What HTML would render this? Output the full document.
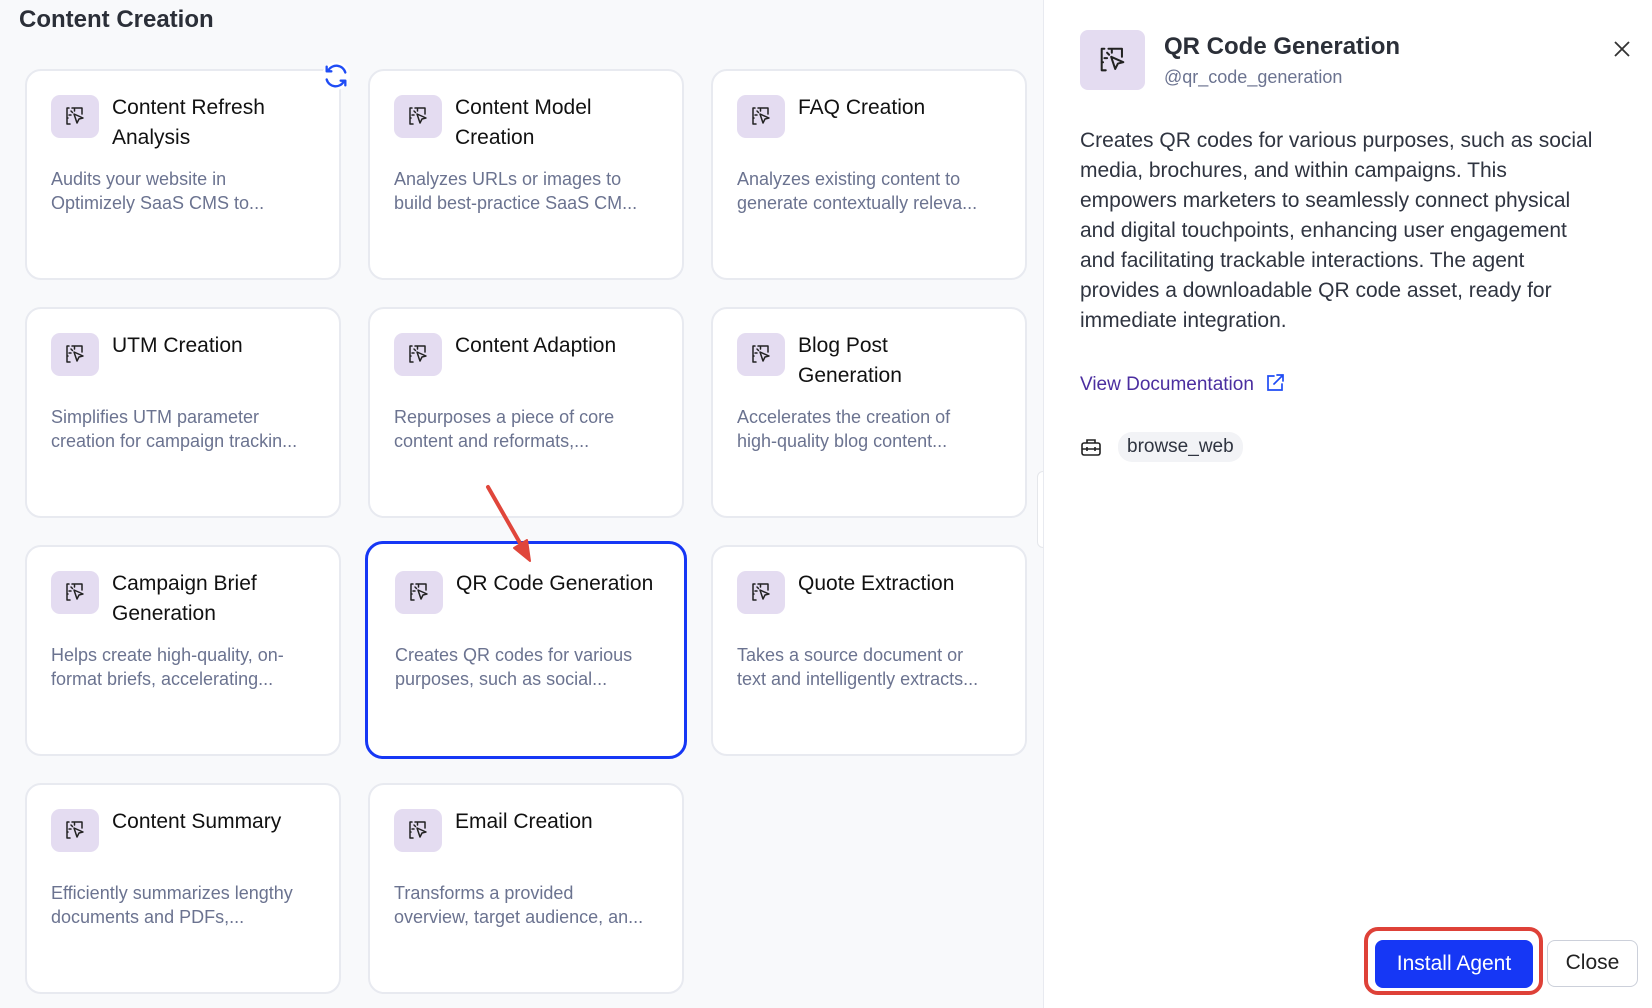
<!DOCTYPE html><html><head><style>
body{margin:0;width:1652px;height:1008px;overflow:hidden;background:#f8f9fb;font-family:"Liberation Sans",sans-serif;position:relative}
h1{position:absolute;left:19px;top:6px;margin:0;font-size:24px;font-weight:bold;color:#2b2f38}
.card{position:absolute;width:316px;height:211px;background:#fff;border:2px solid #e8eaf0;border-radius:16px;box-sizing:border-box}
.ic{position:absolute;left:24px;top:24px;width:48px;height:43px;background:#e4dcf1;border-radius:9px}
.ic svg{position:absolute;left:13px;top:11px}
.t{position:absolute;left:85px;top:22px;right:12px;font-size:21px;line-height:30px;color:#111}
.d{position:absolute;left:24px;top:96px;width:252px;font-size:18px;line-height:24px;color:#6b7390}
.sel{border:3px solid #1637f5}
.panel{position:absolute;left:1043px;top:0;width:609px;height:1008px;background:#fff;border-left:1px solid #e8eaf0}
</style></head><body>
<h1>Content Creation</h1>
<svg width="0" height="0" style="position:absolute"><defs><g id="i" fill="none" stroke="#222" stroke-width="1.5" stroke-linecap="round" stroke-linejoin="round"><path d="M7 2H17V8M5 18H2V2H4M2 12H3"/><path d="M9 8l9 4-4 1-2 4z"/><path d="M6 5l1.5 1.5M9.5 3v2M4 9h2"/></g></defs></svg>

<div class="card" style="left:25px;top:69px"><div class="ic"><svg width="22" height="20" viewBox="0 0 20 20"><use href="#i"/></svg></div><div class="t">Content Refresh Analysis</div><div class="d">Audits your website in Optimizely SaaS CMS to...</div></div>
<div class="card" style="left:368px;top:69px"><div class="ic"><svg width="22" height="20" viewBox="0 0 20 20"><use href="#i"/></svg></div><div class="t">Content Model Creation</div><div class="d">Analyzes URLs or images to build best-practice SaaS CM...</div></div>
<div class="card" style="left:711px;top:69px"><div class="ic"><svg width="22" height="20" viewBox="0 0 20 20"><use href="#i"/></svg></div><div class="t">FAQ Creation</div><div class="d">Analyzes existing content to generate contextually releva...</div></div>

<div class="card" style="left:25px;top:307px"><div class="ic"><svg width="22" height="20" viewBox="0 0 20 20"><use href="#i"/></svg></div><div class="t">UTM Creation</div><div class="d">Simplifies UTM parameter creation for campaign trackin...</div></div>
<div class="card" style="left:368px;top:307px"><div class="ic"><svg width="22" height="20" viewBox="0 0 20 20"><use href="#i"/></svg></div><div class="t">Content Adaption</div><div class="d">Repurposes a piece of core content and reformats,...</div></div>
<div class="card" style="left:711px;top:307px"><div class="ic"><svg width="22" height="20" viewBox="0 0 20 20"><use href="#i"/></svg></div><div class="t">Blog Post<br>Generation</div><div class="d">Accelerates the creation of high-quality blog content...</div></div>

<div class="card" style="left:25px;top:545px"><div class="ic"><svg width="22" height="20" viewBox="0 0 20 20"><use href="#i"/></svg></div><div class="t">Campaign Brief Generation</div><div class="d">Helps create high-quality, on-format briefs, accelerating...</div></div>
<div class="card sel" style="left:365px;top:541px;width:322px;height:218px;border-radius:18px"><div class="ic" style="left:27px;top:27px"><svg width="22" height="20" viewBox="0 0 20 20"><use href="#i"/></svg></div><div class="t" style="left:88px;top:25px">QR Code Generation</div><div class="d" style="left:27px;top:99px">Creates QR codes for various purposes, such as social...</div></div>
<div class="card" style="left:711px;top:545px"><div class="ic"><svg width="22" height="20" viewBox="0 0 20 20"><use href="#i"/></svg></div><div class="t">Quote Extraction</div><div class="d">Takes a source document or text and intelligently extracts...</div></div>

<div class="card" style="left:25px;top:783px"><div class="ic"><svg width="22" height="20" viewBox="0 0 20 20"><use href="#i"/></svg></div><div class="t">Content Summary</div><div class="d">Efficiently summarizes lengthy documents and PDFs,...</div></div>
<div class="card" style="left:368px;top:783px"><div class="ic"><svg width="22" height="20" viewBox="0 0 20 20"><use href="#i"/></svg></div><div class="t">Email Creation</div><div class="d">Transforms a provided overview, target audience, an...</div></div>

<svg style="position:absolute;left:322px;top:62px" width="28" height="28" viewBox="0 0 24 24" fill="none" stroke="#1f4cf5" stroke-width="2" stroke-linecap="round" stroke-linejoin="round"><circle cx="12" cy="12" r="12" fill="#fff" stroke="none"/><path d="M20 9a8 8 0 0 0-14.5-2M4 4v4h4M4 15a8 8 0 0 0 14.5 2M20 20v-4h-4"/></svg>

<svg style="position:absolute;left:0;top:0" width="600" height="600"><path d="M488 487L524 550" stroke="#e0463b" stroke-width="4" stroke-linecap="round"/><path d="M514 548L530 561L527 540Z" fill="#e0463b" stroke="#e0463b" stroke-width="2" stroke-linejoin="round"/></svg>

<div style="position:absolute;left:1037px;top:471px;width:12px;height:77px;background:#fff;border:1px solid #e5e7eb;border-radius:6px;box-sizing:border-box"></div>

<div class="panel">
<div style="position:absolute;left:36px;top:30px;width:65px;height:60px;background:#e4dcf1;border-radius:8px"><svg style="position:absolute;left:19px;top:16px" width="27" height="27" viewBox="0 0 20 20"><use href="#i"/></svg></div>
<div style="position:absolute;left:120px;top:33px;font-size:24px;font-weight:bold;color:#2b2f38">QR Code Generation</div>
<div style="position:absolute;left:120px;top:67px;font-size:18px;color:#6b7390">@qr_code_generation</div>
<svg style="position:absolute;left:569px;top:40px" width="18" height="18" viewBox="0 0 18 18" stroke="#333" stroke-width="1.8"><path d="M2 2L16 16M16 2L2 16"/></svg>
<div style="position:absolute;left:36px;top:126px;width:525px;font-size:21px;line-height:30px;color:#2f3440">Creates QR codes for various purposes, such as social media, brochures, and within campaigns. This empowers marketers to seamlessly connect physical and digital touchpoints, enhancing user engagement and facilitating trackable interactions. The agent provides a downloadable QR code asset, ready for immediate integration.</div>
<div style="position:absolute;left:36px;top:373px;font-size:19px;color:#4b2ea0;white-space:nowrap">View Documentation <svg style="vertical-align:-3px;margin-left:6px" width="20" height="20" viewBox="0 0 20 20" fill="none" stroke="#1f4cf5" stroke-width="1.7" stroke-linecap="round"><path d="M9 3H3v14h14v-6M12 2h6v6M18 2L9 11"/></svg></div>
<svg style="position:absolute;left:37px;top:438px" width="20" height="18" viewBox="0 0 20 18" fill="none" stroke="#222" stroke-width="1.6"><rect x="1" y="5" width="18" height="12" rx="2"/><path d="M6 5V2h8v3M1 11h18M6 9v4M14 9v4"/></svg>
<div style="position:absolute;left:74px;top:432px;height:30px;padding:0 9px;background:#f2f3f6;border-radius:14px;font-size:19px;line-height:30px;color:#2f3440">browse_web</div>
<div style="position:absolute;left:320px;top:927px;width:179px;height:68px;border:4px solid #de4138;border-radius:14px;box-sizing:border-box"></div>
<div style="position:absolute;left:331px;top:940px;width:158px;height:48px;background:#1637f5;border-radius:8px;color:#fff;font-size:21px;line-height:48px;text-align:center">Install Agent</div>
<div style="position:absolute;left:503px;top:940px;width:91px;height:47px;border:1.5px solid #ccd0da;border-radius:8px;box-sizing:border-box;color:#222;font-size:21px;line-height:44px;text-align:center">Close</div>
</div>
</body></html>
